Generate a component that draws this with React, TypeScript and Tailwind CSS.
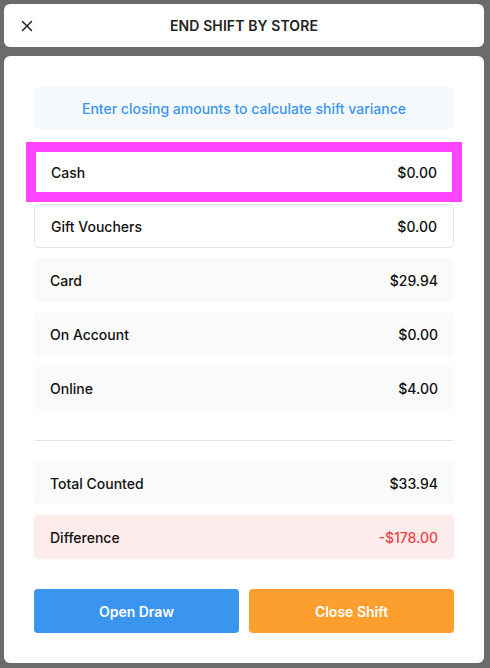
import React from "react";

function Row({ label, value, variant }: { label: string; value: string; variant: "input" | "gray" | "red" | "focus" }) {
  const base = "relative flex h-[44px] items-center justify-between rounded-[4px] px-4 text-[14px] font-medium";
  if (variant === "input" || variant === "focus") {
    return (
      <div className={base + " border border-[#e4e4e7] bg-white text-[#111]"}>
        <span>{label}</span>
        <span>{value}</span>
        {variant === "focus" && (
          <div className="pointer-events-none absolute -inset-[9px] border-[10px] border-[#ff44ff]" />
        )}
      </div>
    );
  }
  if (variant === "red") {
    return (
      <div className={base + " bg-[#feebec] text-[#111]"}>
        <span>{label}</span>
        <span className="text-[#ef4444]">{value}</span>
      </div>
    );
  }
  return (
    <div className={base + " bg-[#fafafa] text-[#111]"}>
      <span>{label}</span>
      <span>{value}</span>
    </div>
  );
}

export default function App() {
  return (
    <div
      className="flex h-[668px] w-[490px] flex-col gap-[9px] bg-[#6b6b6b] pl-[4px] pr-[6px] pt-[4px]"
      style={{ fontFamily: "Inter, 'Noto Sans', sans-serif" }}
    >
      <div className="relative flex h-[43px] items-center justify-center rounded-[6px] bg-white">
        <svg
          className="absolute left-[17px] top-1/2 -translate-y-1/2"
          width="12"
          height="12"
          viewBox="0 0 12 12"
          fill="none"
          stroke="#222"
          strokeWidth="1.5"
          strokeLinecap="round"
        >
          <path d="M1.5 1.5L10.5 10.5M10.5 1.5L1.5 10.5" />
        </svg>
        <span className="text-[14px] font-semibold tracking-[0.1px] text-[#222]">END SHIFT BY STORE</span>
      </div>
      <div className="flex flex-col rounded-[6px] bg-white p-[30px]">
        <div className="flex h-[44px] items-center justify-center rounded-[6px] bg-[#f5f9fd] text-[14px] font-medium text-[#3b96ec]">
          Enter closing amounts to calculate shift variance
        </div>
        <div className="mt-[20px] flex flex-col gap-[10px]">
          <Row label="Cash" value="$0.00" variant="focus" />
          <Row label="Gift Vouchers" value="$0.00" variant="input" />
          <Row label="Card" value="$29.94" variant="gray" />
          <Row label="On Account" value="$0.00" variant="gray" />
          <Row label="Online" value="$4.00" variant="gray" />
        </div>
        <div className="my-[30px] mb-[20px] h-px bg-[#e4e4e7]" />
        <div className="flex flex-col gap-[10px]">
          <Row label="Total Counted" value="$33.94" variant="gray" />
          <Row label="Difference" value="-$178.00" variant="red" />
        </div>
        <div className="mt-[30px] grid grid-cols-2 gap-[10px]">
          <button className="flex h-[44px] items-center justify-center rounded-[4px] bg-[#3a95ee] text-[14px] font-semibold text-white">
            Open Draw
          </button>
          <button className="flex h-[44px] items-center justify-center rounded-[4px] bg-[#fd9f2f] text-[14px] font-semibold text-white">
            Close Shift
          </button>
        </div>
      </div>
    </div>
  );
}
